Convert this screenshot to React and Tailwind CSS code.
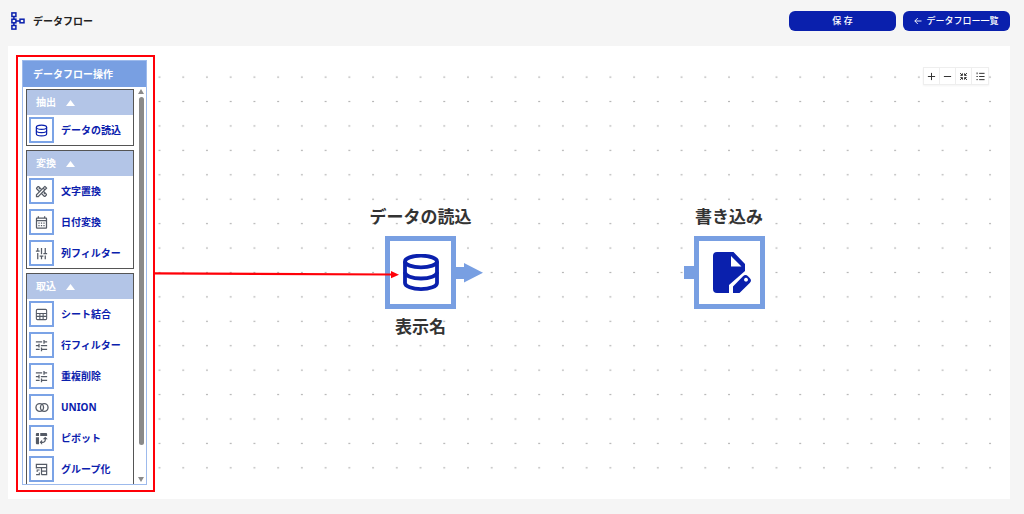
import {
  MdOutlineDesignServices,
  MdOutlineCalendarMonth,
  MdTune,
  MdPivotTableChart,
} from 'react-icons/md'

const DatabaseIcon = () => (
  <svg viewBox="0 0 24 24" className="h-[13px] w-[13px]" fill="none" stroke="#0a20ad" strokeWidth="2.200">
    <ellipse cx="12" cy="6" rx="9.500" ry="4" />
    <path d="M2.500 6v12c0 2.200 4.200 4 9.500 4s9.500-1.800 9.500-4V6" />
    <path d="M2.500 12c0 2.200 4.200 4 9.500 4s9.500-1.800 9.500-4" />
  </svg>
)

const SheetIcon = () => (
  <svg viewBox="0 0 24 24" className="h-[13px] w-[13px]" fill="none" stroke="currentColor" strokeWidth="2">
    <rect x="2.500" y="2.500" width="19" height="19" rx="2" />
    <path d="M2.500 10h19M2.500 15.500h19M9 10v11.500M15 10v11.500" />
  </svg>
)

const UnionIcon = () => (
  <svg viewBox="0 0 28 18" className="h-[9px] w-[14px]" fill="none" stroke="currentColor" strokeWidth="2.600">
    <circle cx="9.500" cy="9" r="7.600" />
    <circle cx="18.500" cy="9" r="7.600" />
  </svg>
)

const GroupIcon = () => (
  <svg viewBox="0 0 24 24" className="h-[13px] w-[13px]" fill="none" stroke="currentColor" strokeWidth="2.200">
    <path d="M2.500 10V2.500h19v19H12M2.500 8.500h19M12 8.500v13M12 15h9.500" />
    <path d="M8.500 13H4v3.500M2 21.500h6v-4" strokeWidth="2" />
  </svg>
)

const FlowLogo = () => (
  <svg viewBox="0 0 14 18" className="h-[18px] w-[14px]" fill="none" stroke="#0a20ad" strokeWidth="1.500">
    <rect x="0.900" y="0.900" width="4" height="3.600" />
    <rect x="0.900" y="7.200" width="4" height="3.600" />
    <rect x="0.900" y="13.500" width="4" height="3.600" />
    <rect x="9" y="7.200" width="4" height="3.600" />
    <path d="M2.900 4.500v2.700M2.900 10.800v2.700M4.900 9H9" />
  </svg>
)

const groups = [
  {
    name: '抽出',
    items: [{ label: 'データの読込', icon: <DatabaseIcon /> }],
  },
  {
    name: '変換',
    items: [
      { label: '文字置換', icon: <MdOutlineDesignServices size={15} /> },
      { label: '日付変換', icon: <MdOutlineCalendarMonth size={15} /> },
      { label: '列フィルター', icon: <MdTune size={15} className="-rotate-90" /> },
    ],
  },
  {
    name: '取込',
    items: [
      { label: 'シート結合', icon: <SheetIcon /> },
      { label: '行フィルター', icon: <MdTune size={15} /> },
      { label: '重複削除', icon: <MdTune size={15} /> },
      { label: 'UNION', icon: <UnionIcon /> },
      { label: 'ピボット', icon: <MdPivotTableChart size={15} /> },
      { label: 'グループ化', icon: <GroupIcon /> },
    ],
  },
]

const tools = [
  { label: '拡大', path: 'M5 1v8M1 5h8' },
  { label: '縮小', path: 'M1 5h8' },
  {
    label: '全体表示',
    path: 'M1.200 1.200l2.300 2.300M3.800 1.500v2.300H1.500M8.800 1.200L6.500 3.500M6.200 1.500v2.300h2.300M1.200 8.800l2.300-2.300M3.800 8.500V6.200H1.500M8.800 8.800L6.500 6.500M6.200 8.500V6.200h2.300',
  },
  { label: '一覧', path: 'M3.500 1.500h6M3.500 5h6M3.500 8.500h6M1.200 .5v2M.5 5h1.500M.5 8.500h1.500' },
]

function Header() {
  return (
    <header className="flex h-[46px] shrink-0 items-center justify-between pb-1 pl-[11px] pr-3.5">
      <div className="flex items-center gap-2">
        <FlowLogo />
        <h1 className="text-[10px] font-bold text-[#222]">データフロー</h1>
      </div>
      <div className="flex gap-[7px] text-[9px] font-medium text-white">
        <button className="h-5 w-[107px] rounded-md bg-[#0a20ad]">保 存</button>
        <button className="flex h-5 w-[107px] items-center justify-center gap-1 rounded-md bg-[#0a20ad]">
          <svg viewBox="0 0 8 8" className="h-2 w-2" fill="none" stroke="currentColor" strokeWidth="0.900">
            <path d="M7.500 4H.8M3.800 1l-3 3 3 3" />
          </svg>
          データフロー一覧
        </button>
      </div>
    </header>
  )
}

function Group({ name, items }) {
  return (
    <section className="shrink-0 border border-[#555]">
      <button className="flex h-[25px] w-full items-center gap-2.5 bg-[#b3c5e7] pl-[9px] text-[10px] font-bold text-white">
        {name}
        <svg viewBox="0 0 9 6" className="h-1.5 w-[9px]" fill="currentColor">
          <path d="M4.500 0L9 6H0z" />
        </svg>
      </button>
      <ul className="flex flex-col gap-[5px] px-0.5 py-0.5">
        {items.map(item => (
          <li key={item.label}>
            <button className="flex w-full items-center gap-[7px] text-[10px] font-bold text-[#0a20ad]">
              <span className="flex h-[26px] w-[25px] shrink-0 items-center justify-center border-2 border-[#7ba3e6] text-[#555b66]">
                {item.icon}
              </span>
              <span className="whitespace-nowrap">{item.label}</span>
            </button>
          </li>
        ))}
      </ul>
    </section>
  )
}

function Sidebar() {
  return (
    <aside className="mb-[7px] ml-2 mt-[9px] flex w-[139px] shrink-0 flex-col border-2 border-[#ff0008] pb-[5px] pl-1 pr-1.5 pt-[3px]">
      <div className="flex min-h-0 flex-1 flex-col border border-[#9dbaec] bg-white">
        <h2 className="flex h-[26px] shrink-0 items-center bg-[#789fe2] pl-2.5 text-[10px] font-bold text-white">
          データフロー操作
        </h2>
        <div className="flex min-h-0 flex-1 pl-[3px] pr-px pt-0.5">
          <div className="flex min-w-0 flex-1 flex-col gap-1 overflow-hidden">
            {groups.map(group => (
              <Group key={group.name} {...group} />
            ))}
          </div>
          <div className="ml-[3px] flex w-2 flex-col items-center justify-between pb-0.5" aria-hidden="true">
            <svg viewBox="0 0 6 5" className="h-[5px] w-1.5" fill="#8a8a8a">
              <path d="M3 0l3 5H0z" />
            </svg>
            <div className="mb-8 mt-[3px] w-[5px] flex-1 rounded-full bg-[#8a8a8a]" />
            <svg viewBox="0 0 6 5" className="h-[5px] w-1.5" fill="#8a8a8a">
              <path d="M3 5l3-5H0z" />
            </svg>
          </div>
        </div>
      </div>
    </aside>
  )
}

function Canvas() {
  return (
    <div className="relative min-w-0 flex-1 overflow-hidden text-[17px] font-bold leading-6 text-[#333]">
      <svg className="absolute inset-x-0 top-4 h-[420px] w-full">
        <defs>
          <pattern id="dots" x="-7.365" y="2.900" width="23.730" height="24.420" patternUnits="userSpaceOnUse">
            <circle cx="11.865" cy="12.210" r="0.800" fill="#999" />
          </pattern>
        </defs>
        <rect width="100%" height="100%" fill="url(#dots)" />
      </svg>

      <div className="absolute left-[215px] top-[159px] flex w-[101px] flex-col items-center">
        <p className="whitespace-nowrap">データの読込</p>
        <div className="mb-1.5 mt-[7px] flex h-[73px] w-[71px] items-center justify-center border-5 border-[#789fe2] bg-white">
          <svg viewBox="0 0 36 37" className="h-[37px] w-9" fill="none" stroke="#0a20ad" strokeWidth="3.800">
            <ellipse cx="18" cy="7.500" rx="16" ry="5.800" />
            <path d="M2 7.500v21.500c0 3.400 7.200 6.100 16 6.100s16-2.700 16-6.100V7.500" />
            <path d="M2 18.200c0 3.500 7.200 6.300 16 6.300s16-2.800 16-6.300" />
          </svg>
        </div>
        <p>表示名</p>
      </div>
      <svg viewBox="0 0 28 20" className="absolute left-[300px] top-[217px] h-5 w-7" fill="#789fe2">
        <path d="M0 4h9V0l19 9.700L9 19.500V16H0z" />
      </svg>

      <div className="absolute left-[524px] top-[159px] flex w-[100px] flex-col items-center">
        <p>書き込み</p>
        <div className="mt-[7px] flex h-[73px] w-[71px] items-center justify-center border-5 border-[#789fe2] bg-white">
          <svg viewBox="0 0 38 42" className="ml-[5px] h-[42px] w-[38px]" fill="#0a20ad">
            <path
              d="M4 0h16.500L32 12v7L16 33v8H4a4 4 0 0 1-4-4V4a4 4 0 0 1 4-4zM18 4v10.500h10.500z"
              fillRule="evenodd"
            />
            <path
              d="M20 41v-6.500L30 24.200a3.500 3.500 0 0 1 5 0l1.700 1.700a3.500 3.500 0 0 1 0 5L26.500 41zM33 25.800a1.900 1.900 0 1 0 .01 0z"
              fillRule="evenodd"
            />
          </svg>
        </div>
      </div>
      <div className="absolute left-[529px] top-[220px] h-[13px] w-[10px] bg-[#789fe2]" />

      <svg viewBox="0 0 246 10" className="absolute left-0 top-[223px] h-2.5 w-[246px]" fill="#ff0008">
        <path d="M0 3.300l236 1.300v2L0 5.500z" />
        <path d="M236 2l8 3.700-8 3.500z" />
      </svg>

      <div className="absolute right-[21px] top-[21px] flex divide-x divide-[#eee] border border-[#eee] bg-white text-[#333] shadow-xs">
        {tools.map(tool => (
          <button key={tool.label} aria-label={tool.label} className="flex h-4 w-4 items-center justify-center">
            <svg viewBox="0 0 10 10" className="h-[9px] w-[9px]" fill="none" stroke="currentColor" strokeWidth="1.100">
              <path d={tool.path} />
            </svg>
          </button>
        ))}
      </div>
    </div>
  )
}

export default function App() {
  return (
    <div className="flex h-screen flex-col bg-[#f5f5f5] font-['Noto_Sans','Noto_Sans_CJK_JP',sans-serif]">
      <Header />
      <main className="mb-[15px] ml-2 mr-3.5 flex min-h-0 flex-1 bg-white">
        <Sidebar />
        <Canvas />
      </main>
    </div>
  )
}
